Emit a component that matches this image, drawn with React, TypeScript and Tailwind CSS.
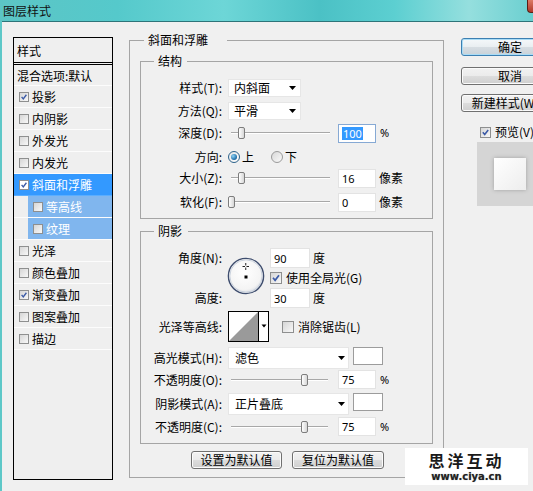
import React from "react";

const FONT = "font-['Noto_Sans_CJK_SC','Noto_Sans',sans-serif]";

function Check({ checked, size, white }: { checked?: boolean; size: string; white?: boolean }) {
  return (
    <span
      className={`${size} shrink-0 inline-flex items-center justify-center border border-[#8e8f8f] ${
        white ? "bg-white" : "bg-[linear-gradient(135deg,#d6d6d6,#f8f8f8)]"
      }`}
    >
      {checked && (
        <svg viewBox="0 0 10 10" className="w-full h-full">
          <path d="M2 4.8 L4.1 7.3 L8 2.2" fill="none" stroke="#3b5aa6" strokeWidth="1.7" />
        </svg>
      )}
    </span>
  );
}

function Radio({ on, className }: { on?: boolean; className: string }) {
  return (
    <span
      className={`${className} w-[12px] h-[12px] shrink-0 rounded-full border flex items-center justify-center ${
        on
          ? "border-[#2c628b] bg-[linear-gradient(135deg,#e6e6e6,#ffffff)]"
          : "border-[#9a9a9a] bg-[linear-gradient(135deg,#d8d8d8,#fafafa)]"
      }`}
    >
      {on && <span className="w-[6px] h-[6px] rounded-full bg-[radial-gradient(circle_at_35%_35%,#8fd3f5,#1b6aa6_70%,#0e3f6b)]" />}
    </span>
  );
}

function Label({ children }: { children: React.ReactNode }) {
  return <div className="w-[81px] shrink-0 text-right whitespace-nowrap">{children}</div>;
}

function Select({ text, box, pl, pr }: { text: string; box: string; pl: string; pr: string }) {
  return (
    <div className={`${box} ${pl} ${pr} shrink-0 bg-white border border-[#e6e6e6] flex items-center`}>
      <span className="flex-1">{text}</span>
      <svg width="7" height="4" viewBox="0 0 7 4">
        <path d="M0 0h7L3.5 4z" fill="#000" />
      </svg>
    </div>
  );
}

function Slider({ thumb, track }: { thumb: string; track: string }) {
  return (
    <div className="relative w-[110px] h-[14px] shrink-0">
      <div className={`absolute left-[3px] ${track} top-[6px] h-[2px] border-t border-[#a8a8a8] border-b border-b-white`} />
      <div
        className={`absolute ${thumb} top-[1px] w-[7px] h-[12px] rounded-[2px] border border-[#7d7d7d] bg-[linear-gradient(90deg,#ffffff,#d6d6d6)]`}
      />
    </div>
  );
}

function NumInput({ value, box, focus }: { value: string; box: string; focus?: boolean }) {
  return (
    <div
      className={`${box} shrink-0 bg-white border ${
        focus ? "border-[#86a9d4]" : "border-[#e3e3e3]"
      } flex items-center pl-[3px] font-['Noto_Sans',sans-serif] text-[11px] leading-none`}
    >
      {focus ? <span className="bg-[#3399ff] text-white px-[1px] py-[1px]">{value}</span> : <span>{value}</span>}
    </div>
  );
}

function Btn({ children, className, primary }: { children: React.ReactNode; className: string; primary?: boolean }) {
  return (
    <div
      className={`${className} h-[18px] shrink-0 flex items-center justify-center whitespace-nowrap rounded-[3px] border ${
        primary
          ? "border-[#3c7fb1] shadow-[inset_0_0_0_1px_#a9dcf6] bg-[linear-gradient(#f4f8fa_0%,#e9eef1_50%,#d7dee3_50%,#c9d2d8_100%)]"
          : "border-[#707070] shadow-[inset_0_0_0_1px_#fbfbfb] bg-[linear-gradient(#f2f2f2_0%,#ebebeb_50%,#dddddd_50%,#cfcfcf_100%)]"
      } leading-none`}
    >
      {children}
    </div>
  );
}

function AngleCircle() {
  return (
    <svg width="38" height="38" viewBox="0 0 38 38">
      <defs>
        <radialGradient id="cg" cx="45%" cy="40%" r="60%">
          <stop offset="0%" stopColor="#ffffff" />
          <stop offset="80%" stopColor="#f4f4f4" />
          <stop offset="100%" stopColor="#d8dce2" />
        </radialGradient>
      </defs>
      <circle cx="19" cy="19" r="17.6" fill="url(#cg)" stroke="#3e4d6e" strokeWidth="1.4" />
      <circle cx="19" cy="19" r="16.2" fill="none" stroke="#c9d1dd" strokeWidth="1" />
      <path d="M15.5 9.5h2.5M19.5 9.5h2.5M18.75 6v2.5M18.75 10.5v2.5" stroke="#222" strokeWidth="1" />
      <rect x="17.5" y="18.5" width="3" height="3" fill="#000" />
    </svg>
  );
}

function Contour() {
  return (
    <svg width="41" height="31" viewBox="0 0 41 31" className="shrink-0">
      <rect x="0.5" y="0.5" width="40" height="30" fill="#fff" stroke="#000" />
      <polygon points="1,30 30,1 30,30" fill="#9a9a9a" />
      <line x1="30.5" y1="0.5" x2="30.5" y2="30.5" stroke="#000" />
      <path d="M33.5 13.5h5l-2.5 3z" fill="#000" />
    </svg>
  );
}

const items: { t: string; c?: boolean; sel?: boolean; sub?: boolean }[] = [
  { t: "投影", c: true },
  { t: "内阴影" },
  { t: "外发光" },
  { t: "内发光" },
  { t: "斜面和浮雕", c: true, sel: true },
  { t: "等高线", sub: true },
  { t: "纹理", sub: true },
  { t: "光泽" },
  { t: "颜色叠加" },
  { t: "渐变叠加", c: true },
  { t: "图案叠加" },
  { t: "描边" },
];

function StyleList() {
  return (
    <div className="ml-[11px] mt-[15px] w-[100px] h-[443px] shrink-0 border border-black bg-[#efefef] flex flex-col">
      <div className="h-[27px] shrink-0 border-b-[3px] border-double border-black pl-[3px] pt-[5px]">样式</div>
      <div className="h-[21px] shrink-0 border-b border-[#fcfcfc] pl-[3px] pt-[3px]">混合选项:默认</div>
      {items.map((it) =>
        it.sub ? (
          <div key={it.t} className="h-[22px] shrink-0 flex border-b border-[#fcfcfc]">
            <div className="ml-[14px] flex-1 flex items-center pl-[5px] bg-[#80b6ee] text-white">
              <Check size="w-[10px] h-[10px]" />
              <span className="ml-[3px]">{it.t}</span>
            </div>
          </div>
        ) : it.sel ? (
          <div key={it.t} className="h-[22px] shrink-0 flex items-center pl-[5px] bg-[#3399ff] text-white border-b border-[#5aaeff]">
            <Check size="w-[10px] h-[10px]" checked white />
            <span className="ml-[3px]">{it.t}</span>
          </div>
        ) : (
          <div key={it.t} className="h-[22px] shrink-0 flex items-center pl-[5px] border-b border-[#fcfcfc]">
            <Check size="w-[10px] h-[10px]" checked={it.c} />
            <span className="ml-[3px]">{it.t}</span>
          </div>
        )
      )}
    </div>
  );
}

function Main() {
  return (
    <fieldset className="ml-[16px] mt-[10px] w-[315px] shrink-0 border border-[#a5a5a5] min-w-0">
      <legend className="ml-[14px] pl-[4px] pr-[19px] leading-[16px]">斜面和浮雕</legend>
      <div className="px-[10px] pb-[8px]">
        <fieldset className="mt-[5px] border border-[#a5a5a5] pb-[6px] min-w-0">
          <legend className="ml-[13px] pl-[4px] pr-[5px] leading-[16px]">结构</legend>
          <div className="mt-[9px] h-[20px] flex items-center">
            <Label>样式(T):</Label>
            <div className="ml-[6px]">
              <Select text="内斜面" box="w-[73px] h-[18px]" pl="pl-[5px]" pr="pr-[4px]" />
            </div>
          </div>
          <div className="mt-[3px] h-[20px] flex items-center">
            <Label>方法(Q):</Label>
            <div className="ml-[6px]">
              <Select text="平滑" box="w-[73px] h-[18px]" pl="pl-[5px]" pr="pr-[4px]" />
            </div>
          </div>
          <div className="mt-[2px] h-[20px] flex items-center">
            <Label>深度(D):</Label>
            <div className="ml-[6px] flex items-center">
              <Slider thumb="left-[10px]" track="right-[8px]" />
              <NumInput value="100" box="w-[38px] h-[19px]" focus />
              <span className="ml-[4px] font-['Noto_Sans',sans-serif] text-[11px]">%</span>
            </div>
          </div>
          <div className="mt-[4px] h-[20px] flex items-center">
            <Label>方向:</Label>
            <Radio on className="ml-[6px]" />
            <span className="ml-[2px]">上</span>
            <Radio className="ml-[17px]" />
            <span className="ml-[2px]">下</span>
          </div>
          <div className="mt-[1px] h-[20px] flex items-center">
            <Label>大小(Z):</Label>
            <div className="ml-[6px] flex items-center">
              <Slider thumb="left-[10px]" track="right-[8px]" />
              <NumInput value="16" box="w-[38px] h-[19px]" />
              <span className="ml-[3px]">像素</span>
            </div>
          </div>
          <div className="mt-[4px] h-[20px] flex items-center">
            <Label>软化(F):</Label>
            <div className="ml-[6px] flex items-center">
              <Slider thumb="left-[0px]" track="right-[8px]" />
              <NumInput value="0" box="w-[38px] h-[19px]" />
              <span className="ml-[3px]">像素</span>
            </div>
          </div>
        </fieldset>

        <fieldset className="mt-[4px] border border-[#a5a5a5] pb-[7px] min-w-0">
          <legend className="ml-[13px] pl-[4px] pr-[6px] leading-[16px]">阴影</legend>
          <div className="mt-[9px] h-[60px] flex">
            <div className="w-[81px] shrink-0 flex flex-col justify-between text-right">
              <div className="h-[20px] leading-[20px]">角度(N):</div>
              <div className="h-[20px] leading-[20px]">高度:</div>
            </div>
            <div className="ml-[5px] mt-[9px] shrink-0">
              <AngleCircle />
            </div>
            <div className="ml-[5px] flex flex-col justify-between">
              <div className="h-[20px] flex items-center">
                <NumInput value="90" box="w-[40px] h-[20px]" />
                <span className="ml-[3px]">度</span>
              </div>
              <div className="flex items-center">
                <Check size="w-[12px] h-[12px]" checked />
                <span className="ml-[4px]">使用全局光(G)</span>
              </div>
              <div className="h-[20px] flex items-center">
                <NumInput value="30" box="w-[40px] h-[20px]" />
                <span className="ml-[3px]">度</span>
              </div>
            </div>
          </div>
          <div className="mt-[3px] h-[31px] flex items-center">
            <Label>光泽等高线:</Label>
            <div className="ml-[6px] flex">
              <Contour />
            </div>
            <div className="ml-[13px] flex">
              <Check size="w-[12px] h-[12px]" />
            </div>
            <span className="ml-[4px]">消除锯齿(L)</span>
          </div>
          <div className="mt-[5px] h-[22px] flex items-center">
            <Label>高光模式(H):</Label>
            <div className="ml-[6px] h-full">
              <Select text="滤色" box="w-[121px] h-[22px]" pl="pl-[6px]" pr="pr-[3px]" />
            </div>
            <div className="ml-[4px] self-start w-[30px] h-[18px] bg-white border border-[#9c9c9c]" />
          </div>
          <div className="mt-[1px] h-[19px] flex items-center">
            <Label>不透明度(O):</Label>
            <div className="ml-[6px] flex items-center">
              <Slider thumb="left-[73px]" track="right-[10px]" />
              <NumInput value="75" box="w-[38px] h-[19px]" />
              <span className="ml-[4px] font-['Noto_Sans',sans-serif] text-[11px]">%</span>
            </div>
          </div>
          <div className="mt-[4px] h-[22px] flex items-center">
            <Label>阴影模式(A):</Label>
            <div className="ml-[6px] h-full">
              <Select text="正片叠底" box="w-[121px] h-[22px]" pl="pl-[6px]" pr="pr-[3px]" />
            </div>
            <div className="ml-[4px] self-start w-[30px] h-[18px] bg-white border border-[#9c9c9c]" />
          </div>
          <div className="mt-[2px] h-[19px] flex items-center">
            <Label>不透明度(C):</Label>
            <div className="ml-[6px] flex items-center">
              <Slider thumb="left-[73px]" track="right-[10px]" />
              <NumInput value="75" box="w-[38px] h-[19px]" />
              <span className="ml-[4px] font-['Noto_Sans',sans-serif] text-[11px]">%</span>
            </div>
          </div>
        </fieldset>

        <div className="mt-[7px] ml-[51px] flex gap-[10px]">
          <Btn className="w-[91px]">设置为默认值</Btn>
          <Btn className="w-[92px]">复位为默认值</Btn>
        </div>
      </div>
    </fieldset>
  );
}

function RightCol() {
  return (
    <div className="ml-[17px] mt-[16px] w-[98px] shrink-0 flex flex-col">
      <Btn primary className="w-[98px]">确定</Btn>
      <Btn className="w-[98px] mt-[11px]">取消</Btn>
      <Btn className="w-[98px] mt-[9px]">新建样式(W)...</Btn>
      <div className="mt-[13px] h-[14px] flex items-center pl-[19px]">
        <Check size="w-[11px] h-[11px]" checked />
        <span className="ml-[4px] whitespace-nowrap">预览(V)</span>
      </div>
      <div className="mt-[3px] ml-[16px] w-[66px] h-[64px] shrink-0 bg-[#d5d5d5] flex items-center justify-center">
        <div className="w-[32px] h-[32px] bg-[linear-gradient(135deg,#ffffff,#ededed)] shadow-[0_0_4px_rgba(0,0,0,0.25)]" />
      </div>
    </div>
  );
}

export default function App() {
  return (
    <div className={`${FONT} relative w-[533px] h-[491px] overflow-hidden bg-[#f0f0f0] text-[12px] leading-[16px] text-black flex flex-col`}>
      <div className="h-[21px] shrink-0 flex items-center bg-[linear-gradient(90deg,#5cc5c5_0%,#55c9cb_22%,#6dd6d7_42%,#4bc1c5_60%,#5ccfd1_74%,#95dfde_88%,#6bcfd0_100%)]">
        <span className="pl-[3px] text-[12px] leading-none text-[#111]">图层样式</span>
        <div className="ml-auto self-start w-[6px] h-[13px] rounded-bl-[4px] border-l border-b border-[#5a1d14] bg-[linear-gradient(#dc7a66,#b0392a)]" />
      </div>
      <div className="flex-1 flex min-h-0">
        <div className="w-[2px] shrink-0 bg-[#5ec8c8]" />
        <div className="flex-1 min-w-0 flex items-start border-t border-[#2e7479] overflow-hidden">
          <StyleList />
          <Main />
          <RightCol />
        </div>
      </div>
      <div className="absolute left-[405px] top-[448px] w-[123px] h-[37px] bg-white flex flex-col items-center pt-[4px]">
        <div className="h-[17px] text-[16px] leading-[17px] font-bold tracking-[3px] text-[#1a1a1a]">思洋互动</div>
        <div className="mt-[2px] h-[11px] font-['DejaVu_Sans',sans-serif] text-[10px] leading-[11px] font-bold text-[#222] [text-shadow:0_0_1px_#999]">
          www.ciya.cn
        </div>
      </div>
    </div>
  );
}
